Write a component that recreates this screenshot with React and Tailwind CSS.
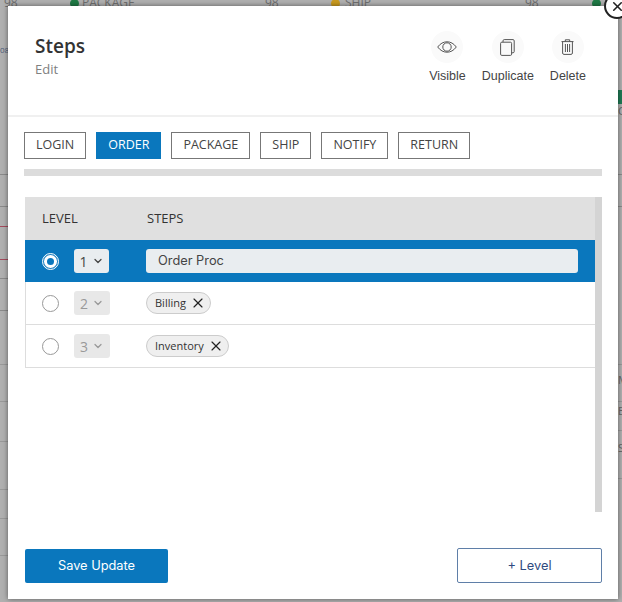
import { ChevronDown, X } from "lucide-react"

const tabs = ["LOGIN", "ORDER", "PACKAGE", "SHIP", "NOTIFY", "RETURN"]

const EyeIcon = () => (
  <svg width="20" height="12" viewBox="0 0 20 12" fill="none" stroke="#555" strokeWidth="1">
    <path d="M0.7 6C3.2 2.6 6.4 0.8 10 0.8S16.8 2.6 19.3 6C16.8 9.4 13.6 11.2 10 11.2S3.2 9.4 0.7 6Z" />
    <circle cx="10" cy="6" r="4.2" />
  </svg>
)

const CopyIcon = () => (
  <svg width="15" height="17" viewBox="0 0 15 17" fill="none" stroke="#555" strokeWidth="1">
    <rect x="0.6" y="3.2" width="11" height="13.2" rx="1.2" />
    <path d="M3 3.2V1.8C3 1.1 3.5 0.6 4.2 0.6H13C13.7 0.6 14.2 1.1 14.2 1.8V12.6C14.2 13.3 13.7 13.8 13 13.8H11.6" />
  </svg>
)

const TrashIcon = () => (
  <svg width="13" height="16" viewBox="0 0 13 16" fill="none" stroke="#555" strokeWidth="1">
    <path d="M0.5 2.6H12.5M4.3 2.6V0.8H8.7V2.6" />
    <path d="M1.6 2.6V14C1.6 14.8 2.1 15.4 2.9 15.4H10.1C10.9 15.4 11.4 14.8 11.4 14V2.6" />
    <path d="M4.4 5V13M6.5 5V13M8.6 5V13" />
  </svg>
)

const actions = [
  { name: "Visible", icon: EyeIcon },
  { name: "Duplicate", icon: CopyIcon },
  { name: "Delete", icon: TrashIcon },
]

const leftRows = [
  "h-[169px] border-[#8a8a8a]",
  "h-[32px] border-[#8a8a8a]",
  "h-[20px] border-[#a34a5c]",
  "h-[33px] border-[#a34a5c]",
  "h-[19px] border-[#8a8a8a]",
  "h-[32px] border-[#8a8a8a]",
  "h-[54px] border-[#999]",
  "h-[37px] border-[#999]",
  "h-[40px] border-[#999]",
  "h-[48px] border-[#999]",
  "h-[29px] border-[#999]",
  "h-[37px] border-[#999]",
]

const LevelSelect = ({ value, active }) => (
  <div
    className={`flex h-6 items-center justify-center gap-1 rounded-[3px] text-[14px] ${
      active ? "w-[35px] bg-[#e9edf0] text-[#444]" : "w-[36px] bg-[#e8e8e8] text-[#999]"
    }`}
  >
    {value}
    <ChevronDown className="h-3 w-3" strokeWidth={2.5} />
  </div>
)

const Chip = ({ label }) => (
  <span className="flex h-[22px] items-center gap-1 rounded-full border border-[#ccc] bg-[#efefef] pl-2 pr-1 text-[11px] text-[#333]">
    {label}
    <X className="h-4 w-4 text-[#222]" strokeWidth={1.75} />
  </span>
)

const App = () => {
  return (
    <div className="relative h-[602px] w-[622px] overflow-hidden bg-[#b0b0b0] font-['Open_Sans',sans-serif]">
      <div className="flex h-[6px] items-center overflow-visible text-[12px] text-[#6e6e6e]">
        <span className="ml-[4px] w-[66px]">98</span>
        <span className="h-[9px] w-[9px] rounded-full bg-[#1f7a45]" />
        <span className="ml-[3px] w-[183px]">PACKAGE</span>
        <span className="w-[66px]">98</span>
        <span className="h-[9px] w-[9px] rounded-full bg-[#c99a1e]" />
        <span className="ml-[5px] w-[180px]">SHIP</span>
        <span className="w-[67px]">98</span>
        <span className="h-[9px] w-[9px] rounded-full bg-[#1f7a45]" />
      </div>

      <div className="flex justify-between">
        <div className="w-[8px] overflow-hidden">
          {leftRows.map((row, i) => (
            <div key={i} className={`${row} border-b text-[8px] leading-[88px] text-[#4a5a7a]`}>
              {i === 0 ? "08" : ""}
            </div>
          ))}
        </div>
        <div className="w-[4px] overflow-hidden text-[11px] leading-[14px] text-[#666]">
          <div className="mt-[84px] h-[14px] bg-[#1f7a55]" />
          <div className="h-[71px] border-b border-[#8a8a8a]">C</div>
          <div className="h-[32px] border-b border-[#8a8a8a]" />
          <div className="h-[158px] border-b border-[#999] pt-[140px]" />
          <div className="h-[37px] border-b border-[#999] pt-[8px]">M</div>
          <div className="h-[29px] border-b border-[#999] pt-[2px]">E</div>
          <div className="h-[48px] border-b border-[#999] pt-[10px]">S</div>
        </div>
      </div>

      <div className="absolute left-[8px] top-[6px] flex h-[593px] w-[610px] flex-col bg-white shadow-[0_0_5px_rgba(0,0,0,0.5)]">
        <div className="flex h-[111px] shrink-0 justify-between border-b-2 border-[#f0f0f0] pl-[27px] pr-[32px] pt-[27px]">
          <div>
            <h1 className="text-[19px] font-semibold leading-[27px] text-[#333]">Steps</h1>
            <p className="text-[13px] leading-[18px] text-[#808080]">Edit</p>
          </div>
          <div className="-mt-[2px] flex gap-[16px] font-['Liberation_Sans',sans-serif] text-[12.5px] text-[#444]">
            {actions.map((action) => (
              <div key={action.name} className="flex flex-col items-center">
                <div className="flex h-8 w-8 items-center justify-center rounded-full bg-[#fafafa]">
                  <action.icon />
                </div>
                <span className="mt-[6px] leading-[15px]">{action.name}</span>
              </div>
            ))}
          </div>
        </div>

        <div className="flex flex-1 flex-col pl-[16px] pt-[15px]">
          <div className="flex gap-[10px]">
            {tabs.map((tab) => (
              <button
                key={tab}
                className={`h-[27px] border px-[11px] text-[12.5px] ${
                  tab === "ORDER"
                    ? "border-[#0a77bd] bg-[#0a77bd] text-white"
                    : "border-[#777] bg-white text-[#444]"
                }`}
              >
                {tab}
              </button>
            ))}
          </div>
          <div className="mt-[10px] h-[7px] w-[578px] bg-[#dcdcdc]" />

          <div className="ml-[1px] mt-[21px] flex h-[315px] w-[577px]">
            <div className="w-[570px]">
              <div className="flex h-[43px] items-center bg-[#e0e0e0] text-[13px] text-[#333]">
                <span className="w-[122px] pl-[17px]">LEVEL</span>
                <span>STEPS</span>
              </div>
              <div className="flex h-[42px] items-center bg-[#0a77bd] pl-[18px]">
                <span className="flex h-[15px] w-[15px] items-center justify-center rounded-full border-[1.5px] border-[#0a77bd] bg-white outline outline-white">
                  <span className="h-[7px] w-[7px] rounded-full bg-[#0a77bd]" />
                </span>
                <div className="ml-[16px]"><LevelSelect value="1" active /></div>
                <div className="ml-[37px] flex h-6 w-[432px] items-center rounded-[3px] bg-[#e9edf0] pl-3 font-['Inter',sans-serif] text-[12.8px] text-[#444]">
                  Order Proc
                </div>
              </div>
              <div className="flex h-[43px] items-center border-b border-l border-[#ddd] pl-[16px]">
                <span className="h-[17px] w-[17px] rounded-full border border-[#999] bg-white" />
                <div className="ml-[15px]"><LevelSelect value="2" /></div>
                <div className="ml-[36px]"><Chip label="Billing" /></div>
              </div>
              <div className="flex h-[43px] items-center border-b border-l border-[#ddd] pl-[16px]">
                <span className="h-[17px] w-[17px] rounded-full border border-[#999] bg-white" />
                <div className="ml-[15px]"><LevelSelect value="3" /></div>
                <div className="ml-[36px]"><Chip label="Inventory" /></div>
              </div>
            </div>
            <div className="w-[7px] bg-[#d4d4d4]" />
          </div>

          <div className="ml-[1px] mt-[36px] flex w-[577px] items-end justify-between font-['Inter',sans-serif] text-[12.8px]">
            <button className="h-[34px] w-[143px] rounded-[2px] bg-[#0a77bd] text-white">Save Update</button>
            <button className="h-[35px] w-[145px] rounded-[2px] border border-[#5f7fa8] bg-white text-[#2f4a80]">+ Level</button>
          </div>
        </div>
      </div>

      <div className="absolute left-[604px] top-[-7px] flex h-[26px] w-[26px] items-center justify-center rounded-full border-2 border-[#222] bg-white">
        <X className="h-[15px] w-[15px] text-[#222]" strokeWidth={2.5} />
      </div>
    </div>
  )
}

export default App
